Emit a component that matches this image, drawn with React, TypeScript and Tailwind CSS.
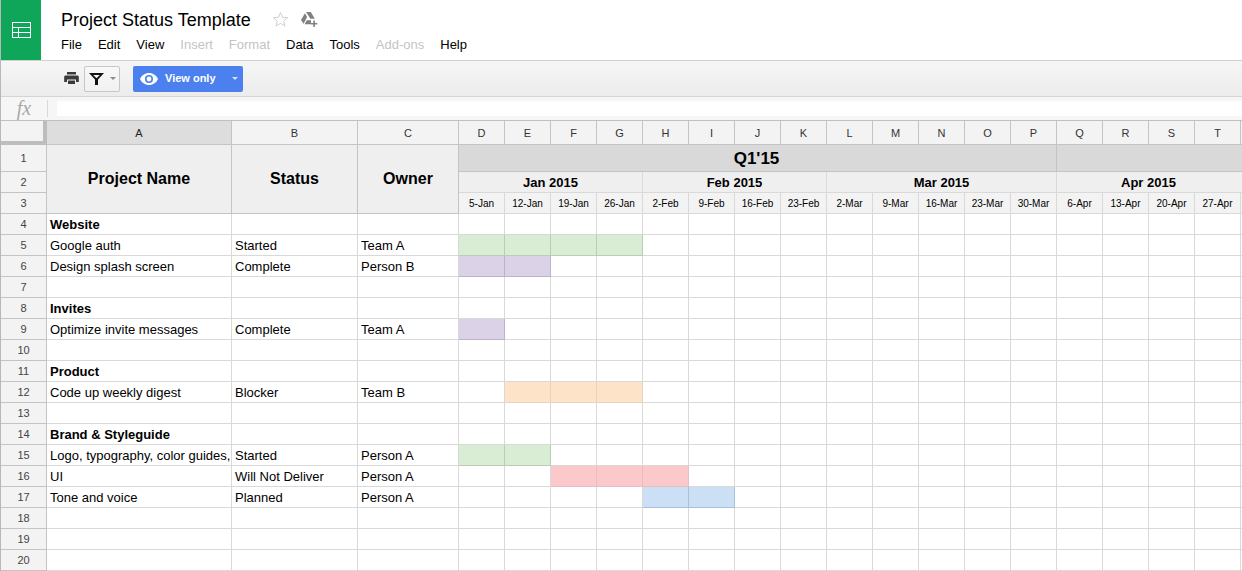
import React from 'react'

const columns = ['D', 'E', 'F', 'G', 'H', 'I', 'J', 'K', 'L', 'M', 'N', 'O', 'P', 'Q', 'R', 'S', 'T']
const weeks = ['5-Jan', '12-Jan', '19-Jan', '26-Jan', '2-Feb', '9-Feb', '16-Feb', '23-Feb', '2-Mar', '9-Mar', '16-Mar', '23-Mar', '30-Mar', '6-Apr', '13-Apr', '20-Apr', '27-Apr']

type Row = { name?: string; bold?: boolean; status?: string; owner?: string; fill?: string; from?: number; to?: number }

const green = 'bg-[#d8edd4] border-[#b7cfb0]'
const purple = 'bg-[#dcd2e8] border-[#bcb2c9]'
const orange = 'bg-[#fde4c9] border-[#e8d3bc]'
const red = 'bg-[#fbc9ca] border-[#e6c0c0]'
const blue = 'bg-[#cbe0f4] border-[#a9c1d8]'

const rows: Row[] = [
  { name: 'Website', bold: true },
  { name: 'Google auth', status: 'Started', owner: 'Team A', fill: green, from: 0, to: 3 },
  { name: 'Design splash screen', status: 'Complete', owner: 'Person B', fill: purple, from: 0, to: 1 },
  {},
  { name: 'Invites', bold: true },
  { name: 'Optimize invite messages', status: 'Complete', owner: 'Team A', fill: purple, from: 0, to: 0 },
  {},
  { name: 'Product', bold: true },
  { name: 'Code up weekly digest', status: 'Blocker', owner: 'Team B', fill: orange, from: 1, to: 3 },
  {},
  { name: 'Brand & Styleguide', bold: true },
  { name: 'Logo, typography, color guides,', status: 'Started', owner: 'Person A', fill: green, from: 0, to: 1 },
  { name: 'UI', status: 'Will Not Deliver', owner: 'Person A', fill: red, from: 2, to: 4 },
  { name: 'Tone and voice', status: 'Planned', owner: 'Person A', fill: blue, from: 4, to: 5 },
  {},
  {},
  {},
]

const line = 'border-r border-b border-[#d9d9d9]'
const headLine = 'border-r border-b border-[#c4c4c4]'
const colHead = `${headLine} bg-[#f3f3f3] flex items-center justify-center pt-[1px] text-[11px] text-[#333]`
const rowHead = `${headLine} bg-[#f3f3f3] flex items-center justify-center pt-[1px] text-[11px] text-[#444]`
const text = 'border-r border-b border-[#d9d9d9] pl-[3px] whitespace-nowrap overflow-hidden text-[13px] leading-[22px] text-black'
const merged = `${headLine} bg-[#efefef] flex items-center justify-center font-bold text-black`
const month = `${line} bg-[#efefef] flex items-center justify-center pt-[1px] text-[13px] font-bold text-black`

function SheetsLogo() {
  return (
    <svg width="20" height="17" viewBox="0 0 20 17" fill="none" stroke="#fff" strokeWidth="1">
      <rect x="0.5" y="0.5" width="18" height="15" />
      <path d="M0.5 5.500H18.500M0.500 10.500H18.500M6.500 5.500V15.500" />
    </svg>
  )
}

function DriveIcon() {
  return (
    <svg width="18" height="16" viewBox="0 0 18 16" fill="#808080">
      <path d="M6 0h4.800l4 6.800h-4.400z" />
      <path d="M4.900 1.200 7.100 5 3.600 11.800 1 8z" />
      <path d="M4.600 12.300l2.200-4h4.200v4z" />
      <path d="M13.300 8.500h1.600v2.400h2.400v1.600h-2.400V15h-1.600v-2.500h-2.400v-1.600h2.400z" />
    </svg>
  )
}

function PrintIcon() {
  return (
    <svg width="15" height="13" viewBox="0 0 15 13" fill="#3a3a3a">
      <path d="M3 0h9v2.500H3z" />
      <path d="M1.500 3.500h12c.7 0 1.300.6 1.300 1.300V10h-2.800V7.500H3V10H.2V4.800c0-.7.6-1.300 1.300-1.300z" />
      <path d="M4 8.500h7V12H4z" />
    </svg>
  )
}

function FilterIcon() {
  return (
    <svg width="15" height="12" viewBox="0 0 15 12" fill="#111">
      <path fillRule="evenodd" d="M0 0h15L9 6.500V12H6V6.500zM4.200 2l3.300 3.300L10.800 2z" />
    </svg>
  )
}

function EyeIcon() {
  return (
    <svg width="18" height="12" viewBox="0 0 18 12">
      <path fill="#fff" d="M9 0C5 0 1.600 2.500 0 6c1.600 3.500 5 6 9 6s7.400-2.500 9-6c-1.600-3.500-5-6-9-6z" />
      <circle cx="9" cy="6" r="4" fill="#4c80ef" />
      <circle cx="9" cy="6" r="2.400" fill="#fff" />
    </svg>
  )
}

export default function App() {
  return (
    <div className="h-[571px] w-[1242px] overflow-hidden bg-white border-l border-[#b8b8b8] font-['Liberation_Sans',Arial,sans-serif]">
      <header className="flex h-[61px] border-b border-[#d0d0d0]">
        <div className="flex h-full w-[40px] items-center justify-center bg-[#0fa65a] pl-[1px]">
          <SheetsLogo />
        </div>
        <div className="pl-[20px]">
          <div className="flex items-center pt-[9px]">
            <h1 className="text-[18px] leading-[22px] text-black">Project Status Template</h1>
            <svg className="ml-[21px] -mt-[2px]" width="17" height="16" viewBox="0 0 17 16" fill="none" stroke="#d0d0d0">
              <path d="M8.500 1.500l2 4.800 5.200.4-4 3.400 1.300 5-4.500-2.700-4.500 2.700 1.300-5-4-3.400 5.200-.4z" />
            </svg>
            <span className="ml-[11px] -mt-[1px] flex">
              <DriveIcon />
            </span>
          </div>
          <nav className="mt-[6px] flex gap-4 text-[13px] leading-[16px] text-black">
            <span>File</span>
            <span>Edit</span>
            <span>View</span>
            <span className="text-[#c4c4c4]">Insert</span>
            <span className="text-[#c4c4c4]">Format</span>
            <span>Data</span>
            <span>Tools</span>
            <span className="text-[#c4c4c4]">Add-ons</span>
            <span>Help</span>
          </nav>
        </div>
      </header>

      <div className="flex h-[36px] items-center border-b border-[#d4d4d4] bg-gradient-to-b from-[#f6f6f6] to-[#ececec] pl-[63px]">
        <PrintIcon />
        <div className="ml-[5px] flex h-[26px] w-[36px] items-center rounded-[2px] border border-[#c6c6c6] bg-gradient-to-b from-[#f8f8f8] to-[#f1f1f1] pl-[4px]">
          <FilterIcon />
          <span className="ml-[6px] h-0 w-0 border-x-[3px] border-t-[3px] border-x-transparent border-t-[#8c8c8c]" />
        </div>
        <div className="ml-[13px] flex h-[26px] w-[110px] items-center rounded-[2px] bg-[#4c80ef] pl-[7px] text-[11px] font-bold text-white">
          <EyeIcon />
          <span className="ml-[7px]">View only</span>
          <span className="ml-[16px] h-0 w-0 border-x-[3px] border-t-[3px] border-x-transparent border-t-[#d6e2fb]" />
        </div>
      </div>

      <div className="flex h-[24px] border-b border-[#c0c0c0] bg-[#f6f6f6]">
        <div className="w-[46px] text-center font-['Liberation_Serif',serif] text-[20px] italic leading-[23px] text-[#a8a8a8]">fx</div>
        <div className="my-[3px] w-px bg-[#d8d8d8]" />
        <div className="mb-[4px] ml-[9px] mt-[4px] flex-1 bg-white" />
      </div>

      <div className="grid grid-cols-[46px_185px_126px_101px_repeat(17,46px)_1fr] grid-rows-[24px_27px_21px_21px_repeat(17,21px)]">
        {/* column letters */}
        <div className={`${headLine} bg-[#f3f3f3] border-r-[4px] border-b-[4px] border-r-[#bdbdbd] border-b-[#bdbdbd]`} />
        <div className={`${headLine} bg-[#dddddd] flex items-center justify-center pt-[1px] text-[11px] text-[#222]`}>A</div>
        <div className={colHead}>B</div>
        <div className={colHead}>C</div>
        {columns.map((c) => (
          <div key={c} className={colHead}>{c}</div>
        ))}
        <div className="border-b border-[#c4c4c4] bg-[#f3f3f3]" />

        {/* frozen header rows */}
        <div className={rowHead}>1</div>
        <div className={`${merged} row-span-3 text-[16px]`}>Project Name</div>
        <div className={`${merged} row-span-3 text-[16px]`}>Status</div>
        <div className={`${merged} row-span-3 text-[16px]`}>Owner</div>
        <div className={`${headLine} col-span-13 bg-[#d9d9d9] flex items-center justify-center pt-[1px] pr-[2px] text-[17px] font-bold text-black`}>Q1'15</div>
        <div className="col-span-5 border-b border-[#c4c4c4] bg-[#d9d9d9]" />

        <div className={rowHead}>2</div>
        <div className={`${month} col-span-4`}>Jan 2015</div>
        <div className={`${month} col-span-4`}>Feb 2015</div>
        <div className={`${month} col-span-5`}>Mar 2015</div>
        <div className={`${month} col-span-4 border-r-0 pr-[1px]`}>Apr 2015</div>
        <div className="border-b border-[#d9d9d9] bg-[#efefef]" />

        <div className={rowHead}>3</div>
        {weeks.map((w) => (
          <div key={w} className={`${line} bg-[#f3f3f3] flex items-center justify-center pt-[1px] text-[10px] text-black`}>{w}</div>
        ))}
        <div className="border-b border-[#d9d9d9] bg-[#f3f3f3]" />

        {/* data rows */}
        {rows.map((r, i) => (
          <React.Fragment key={i}>
            <div className={rowHead}>{i + 4}</div>
            <div className={`${text} ${r.bold ? 'font-bold' : ''}`}>{r.name}</div>
            <div className={text}>{r.status}</div>
            <div className={text}>{r.owner}</div>
            {columns.map((c, j) => {
              const on = r.fill && j >= (r.from ?? 0) && j <= (r.to ?? -1)
              return <div key={c} className={on ? `border-r border-b ${r.fill}` : line} />
            })}
            <div className="border-b border-[#d9d9d9]" />
          </React.Fragment>
        ))}
      </div>
    </div>
  )
}
